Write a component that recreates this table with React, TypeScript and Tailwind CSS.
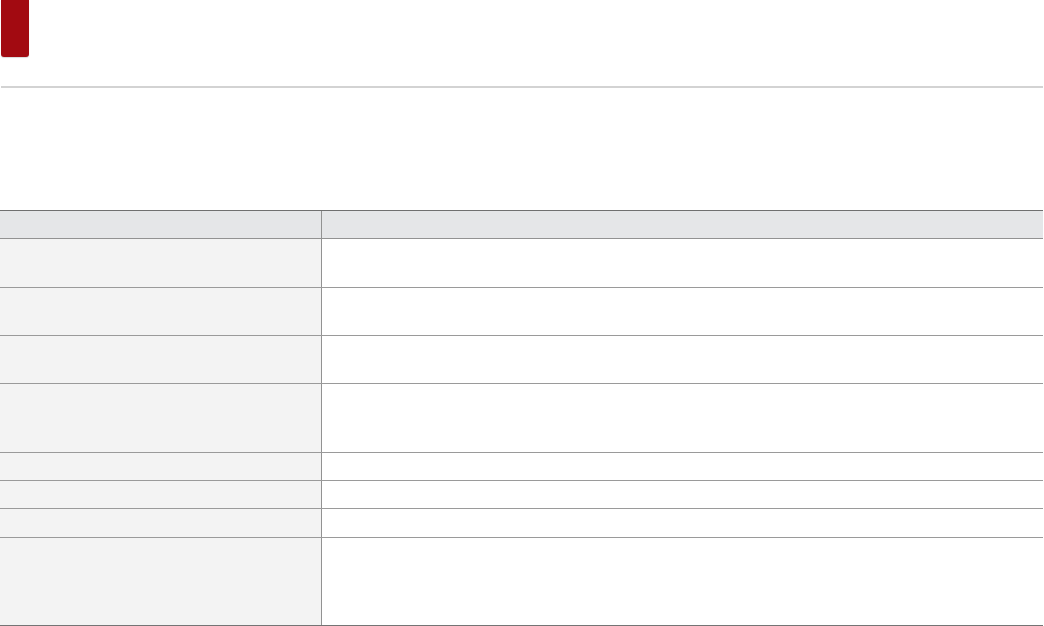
const rows = [48, 47, 47, 68, 27, 27, 28, 87];

export default function App() {
	return (
		<div className="w-[1044px] h-[626px] bg-white overflow-hidden font-['Liberation_Sans',sans-serif]">
			<div className="ml-[1px] w-[28px] h-[57px] bg-[#a20a11] rounded-b-[3px] shadow-[0_1px_1px_rgba(0,0,0,0.15)]"/>
			<div className="mt-[29px] ml-[1px] w-[1042px] h-[2px] bg-[#d3d3d3]"/>
			<div className="mt-[122px] w-[1043px] border-t border-[#707070]">
				<div className="flex flex-row h-[28px] border-b border-[#929292] bg-[#e5e6e8]">
					<div className="w-[321px]"/>
					<div className="flex-1 border-l border-[#929292]"/>
				</div>
				{rows.map((h, i) => (
					<div
						key={i}
						className={`flex flex-row border-b ${i === rows.length - 1 ? 'border-[#747474]' : 'border-[#9a9a9a]'}`}
						style={{height: h + 1}}
					>
						<div className="w-[321px] bg-[#f3f3f3]"/>
						<div className="flex-1 bg-white border-l border-[#929292]"/>
					</div>
				))}
			</div>
		</div>
	);
}
